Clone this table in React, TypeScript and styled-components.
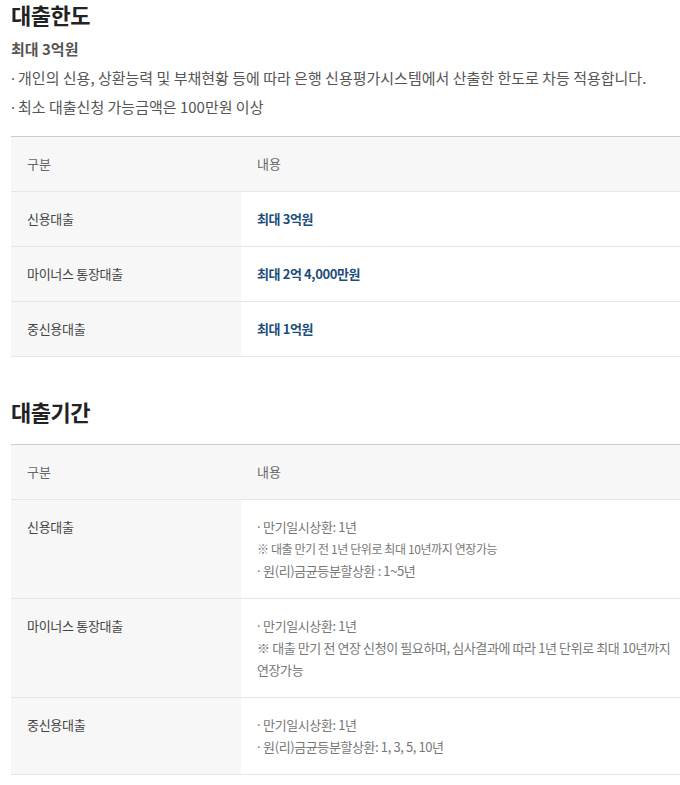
import styled, { createGlobalStyle } from "styled-components";

const GlobalStyle = createGlobalStyle`
  html, body {
    margin: 0;
    padding: 0;
    background: #fff;
  }
  body {
    font-family: "Noto Sans CJK KR", "Noto Sans", sans-serif;
    color: #555;
  }
`;

const Page = styled.div`
  padding: 0 0 0 11px;
`;

const Section = styled.section<{ $first?: boolean }>`
  margin-top: ${(p) => (p.$first ? "0" : "40px")};
`;

const Title = styled.h2`
  margin: 0;
  font-size: 22px;
  line-height: 28px;
  font-weight: 700;
  color: #222;
  letter-spacing: -0.5px;
`;

const Sub = styled.div`
  font-size: 15px;
  line-height: 29px;
  font-weight: 700;
  color: #555;
  margin-top: 6px;
`;

const Bullet = styled.div`
  font-size: 15px;
  line-height: 29px;
  color: #555;
`;

const Dot = styled.span`
  font-family: "Noto Sans", sans-serif;
  line-height: 0;
  margin-right: 3px;
`;

const Table = styled.table<{ $gap: number }>`
  width: 100%;
  margin-top: ${(p) => p.$gap}px;
  border-collapse: collapse;
  border-top: 1px solid #cccccc;
  table-layout: fixed;
`;

const Th = styled.th`
  background: #f7f7f7;
  font-size: 13px;
  line-height: 22px;
  font-weight: 400;
  color: #666;
  text-align: left;
  padding: 16px 16px;
  border-bottom: 1px solid #e6e6e6;
`;

const Label = styled.td`
  width: 198px;
  background: #f7f7f7;
  font-size: 13px;
  line-height: 22px;
  color: #444;
  padding: 16px 16px;
  vertical-align: top;
  border-bottom: 1px solid #e6e6e6;
  letter-spacing: -0.3px;
`;

const Cell = styled.td`
  font-size: 13px;
  line-height: 22px;
  color: #777;
  padding: 16px 14px 16px 16px;
  vertical-align: top;
  border-bottom: 1px solid #e6e6e6;
  letter-spacing: -0.4px;
  word-break: keep-all;
`;

const Amount = styled.strong`
  color: #1d4e7b;
  font-weight: 700;
`;

const Line = styled.div<{ $note?: boolean }>`
  font-size: ${(p) => (p.$note ? "12px" : "13px")};
  color: #777;
  white-space: nowrap;
`;

type Item = { text: string; mark: "dot" | "note" | "none"; small?: boolean };

const limits = [
  ["신용대출", "최대 3억원"],
  ["마이너스 통장대출", "최대 2억 4,000만원"],
  ["중신용대출", "최대 1억원"],
];

const periods: [string, Item[]][] = [
  [
    "신용대출",
    [
      { text: "만기일시상환: 1년", mark: "dot" },
      { text: "대출 만기 전 1년 단위로 최대 10년까지 연장가능", mark: "note", small: true },
      { text: "원(리)금균등분할상환 : 1~5년", mark: "dot" },
    ],
  ],
  [
    "마이너스 통장대출",
    [
      { text: "만기일시상환: 1년", mark: "dot" },
      { text: "대출 만기 전 연장 신청이 필요하며, 심사결과에 따라 1년 단위로 최대 10년까지", mark: "note" },
      { text: "연장가능", mark: "none" },
    ],
  ],
  [
    "중신용대출",
    [
      { text: "만기일시상환: 1년", mark: "dot" },
      { text: "원(리)금균등분할상환: 1, 3, 5, 10년", mark: "dot" },
    ],
  ],
];

const Head = () => (
  <thead>
    <tr>
      <Th style={{ width: 198 }}>구분</Th>
      <Th>내용</Th>
    </tr>
  </thead>
);

const Mark = ({ mark }: { mark: Item["mark"] }) =>
  mark === "dot" ? <Dot>·</Dot> : mark === "note" ? <>※ </> : null;

export default function App() {
  return (
    <Page>
      <GlobalStyle />
      <Section $first>
        <Title>대출한도</Title>
        <Sub>최대 3억원</Sub>
        <Bullet>
          <Dot>·</Dot>개인의 신용, 상환능력 및 부채현황 등에 따라 은행 신용평가시스템에서 산출한 한도로 차등 적용합니다.
        </Bullet>
        <Bullet>
          <Dot>·</Dot>최소 대출신청 가능금액은 100만원 이상
        </Bullet>
        <Table $gap={15}>
          <Head />
          <tbody>
            {limits.map(([k, v]) => (
              <tr key={k}>
                <Label>{k}</Label>
                <Cell>
                  <Amount>{v}</Amount>
                </Cell>
              </tr>
            ))}
          </tbody>
        </Table>
      </Section>
      <Section>
        <Title>대출기간</Title>
        <Table $gap={19}>
          <Head />
          <tbody>
            {periods.map(([k, lines]) => (
              <tr key={k}>
                <Label>{k}</Label>
                <Cell>
                  {lines.map((l) => (
                    <Line key={l.text} $note={l.small}>
                      <Mark mark={l.mark} />
                      {l.text}
                    </Line>
                  ))}
                </Cell>
              </tr>
            ))}
          </tbody>
        </Table>
      </Section>
    </Page>
  );
}
